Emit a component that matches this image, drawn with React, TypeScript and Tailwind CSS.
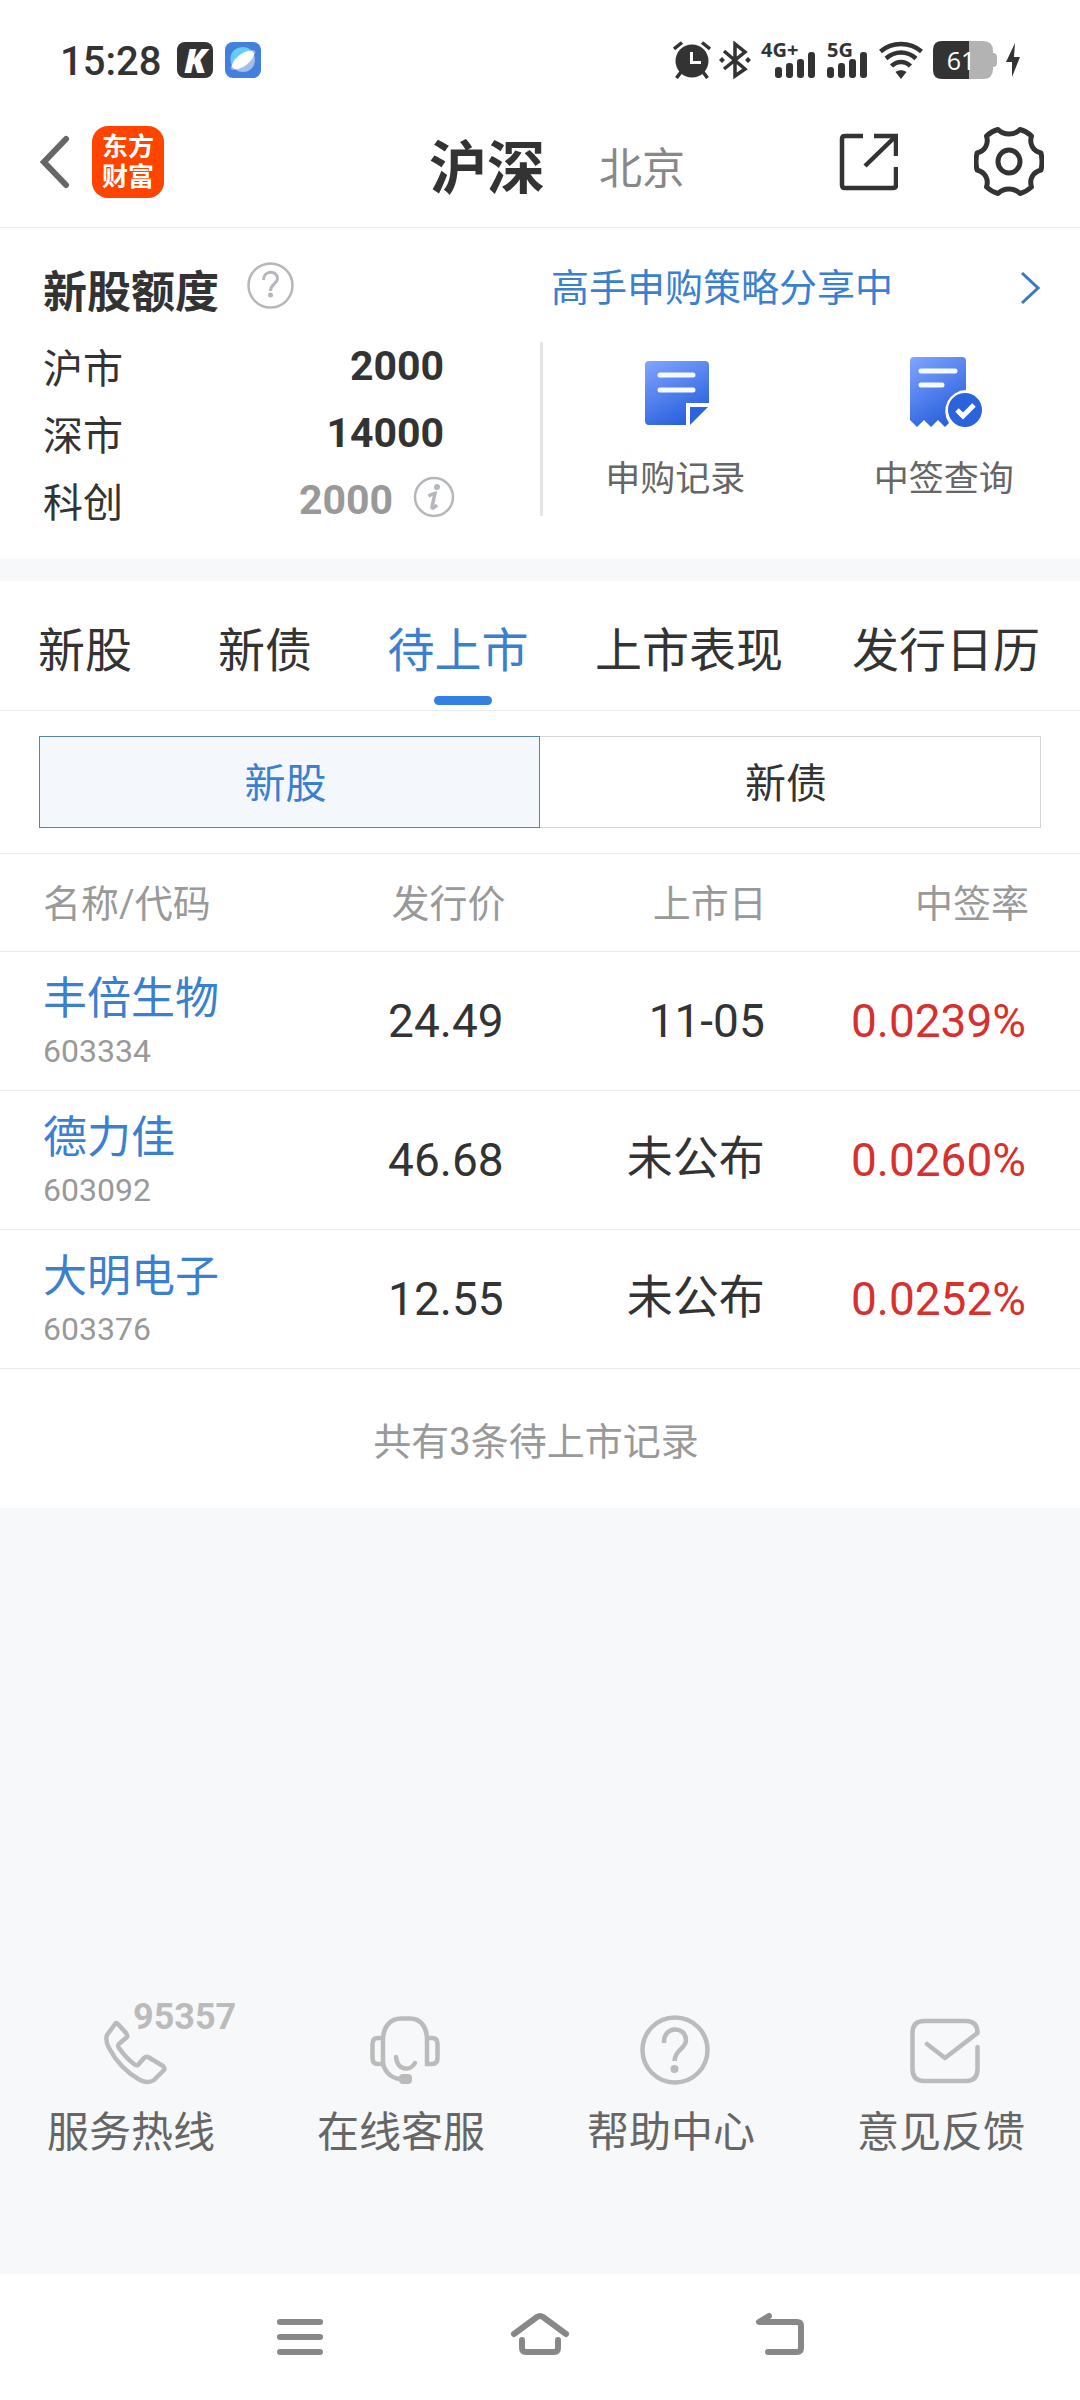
import React, { useState } from 'react';

const quotas = [
  { market: '沪市', amount: '2000' },
  { market: '深市', amount: '14000' },
];

const stocks = [
  { name: '丰倍生物', code: '603334', price: '24.49', date: '11-05', rate: '0.0239%' },
  { name: '德力佳', code: '603092', price: '46.68', date: '未公布', rate: '0.0260%' },
  { name: '大明电子', code: '603376', price: '12.55', date: '未公布', rate: '0.0252%' },
];

const tabs = ['新股', '新债', '待上市', '上市表现', '发行日历'];

const SignalBars: React.FC = () => (
  <svg width="40" height="26" viewBox="0 0 40 26" fill="#333">
    <rect x="0" y="15" width="7" height="11" rx="3" />
    <rect x="11" y="11" width="7" height="15" rx="3" />
    <rect x="22" y="7" width="7" height="19" rx="3" />
    <rect x="33" y="0" width="7" height="26" rx="3" />
  </svg>
);

const StatusBar: React.FC = () => (
  <div className="flex h-24 items-center justify-between pt-6 pr-[60px] pl-[60px] text-[#333]">
    <div className="flex items-center">
      <span className="pt-1 text-[40px] leading-[48px] font-medium">15:28</span>
      <span className="ml-4 flex h-[36px] w-[36px] items-center justify-center rounded-lg bg-[#333] font-['Open_Sans',sans-serif] text-[34px] leading-[36px] font-extrabold text-white italic">
        K
      </span>
      <svg className="ml-3" width="36" height="36" viewBox="0 0 36 36">
        <rect width="36" height="36" rx="8" fill="#4380db" />
        <circle cx="18" cy="18" r="12" fill="#a3bdec" />
        <path d="M7 23A12 12 0 0 1 28 11Z" fill="#62cdf5" />
        <ellipse cx="18" cy="18" rx="15" ry="5" transform="rotate(-37 18 18)" fill="#8fb1ea" />
        <ellipse cx="18" cy="18" rx="13" ry="6" transform="rotate(-37 18 18)" fill="#fff" />
      </svg>
    </div>

    <div className="flex items-center">
      <svg width="38" height="38" viewBox="0 0 38 38" fill="none" stroke="#333" strokeWidth="3">
        <circle cx="19" cy="20" r="16.500" fill="#333" stroke="none" />
        <path d="M1 8L9 1.500M37 8L29 1.500M8 31L3.500 37M30 31L34.500 37" strokeWidth="3.500" />
        <path d="M18.500 11V21.500H28" stroke="#fff" />
      </svg>
      <svg className="ml-2" width="32" height="38" viewBox="0 0 32 38" fill="none" stroke="#333" strokeWidth="3.500">
        <path d="M5 10L26 28L16 35V3L26 11L5 28" />
        <path d="M0 19L3 16L6 19L3 22ZM26 19L29 16L32 19L29 22Z" fill="#333" stroke="none" />
      </svg>
      <div className="relative ml-6 pt-[10px]">
        <span className="absolute -top-1 -left-[14px] font-['Open_Sans',sans-serif] text-[20px] leading-6 font-bold">4G+</span>
        <SignalBars />
      </div>
      <div className="relative ml-3 pt-[10px]">
        <span className="absolute -top-1 left-0 font-['Open_Sans',sans-serif] text-[20px] leading-6 font-bold">5G</span>
        <SignalBars />
      </div>
      <svg className="ml-3" width="44" height="38" viewBox="0 0 44 38" fill="none" stroke="#333" strokeWidth="4.500">
        <path d="M1.500 10.500C13 0.500 31 0.500 42.500 10.500" />
        <path d="M7 17.500C16 9.500 28 9.500 37 17.500" />
        <path d="M12.500 25C18 19.500 26 19.500 31.500 25" />
        <path d="M22 38L16.500 31C20 28.500 24 28.500 27.500 31Z" fill="#333" stroke="none" />
      </svg>
      <div className="relative ml-[10px] h-[38px] w-[64px]">
        <svg width="64" height="38" viewBox="0 0 64 38">
          <path d="M36 0H50Q60 0 60 10V12Q64 12 64 16V22Q64 26 60 26V28Q60 38 50 38H36Z" fill="#b3b3b3" />
          <path d="M36 0H9Q0 0 0 9V29Q0 38 9 38H36Z" fill="#333" />
        </svg>
        <span className="absolute inset-0 pr-2 text-center font-['Open_Sans',sans-serif] text-[25px] leading-[38px] text-white">61</span>
      </div>
      <svg className="ml-[9px]" width="14" height="34" viewBox="0 0 14 34" fill="#333">
        <path d="M9 0L0 19H6L6 34L14 14H8Z" />
      </svg>
    </div>
  </div>
);

const Header: React.FC = () => (
  <header className="border-b border-[#ebebeb]">
    <StatusBar />
    <div className="grid grid-cols-3 items-center pr-9 pl-10">
      <div className="flex h-[131px] items-center">
        <button aria-label="返回">
          <svg width="30" height="54" viewBox="0 0 30 54" fill="none" stroke="#666" strokeWidth="6" strokeLinecap="round">
            <path d="M26 4L4 27L26 50" />
          </svg>
        </button>
        <a
          href="#home"
          className="ml-[22px] flex h-[72px] w-[72px] items-center justify-center rounded-2xl bg-[#ff4400] text-center text-[26px] leading-[30px] font-bold text-white"
        >
          东方
          <br />
          财富
        </a>
      </div>
      <div className="flex items-center justify-center gap-[54px] pt-[14px] pl-[30px] whitespace-nowrap">
        <button className="text-[58px] leading-[72px] font-bold text-[#333]">沪深</button>
        <button className="text-[43px] leading-[72px] text-[#888]">北京</button>
      </div>
      <div className="flex items-center justify-end gap-[76px]">
        <button aria-label="分享">
          <svg width="60" height="60" viewBox="0 0 60 60" fill="none" stroke="#333" strokeWidth="4.500">
            <path d="M25 4H7Q4 4 4 7V53Q4 56 7 56H55Q58 56 58 53V35" />
            <path d="M36 4H58V24M58 4L27 34" />
          </svg>
        </button>
        <button aria-label="设置">
          <svg width="70" height="71" viewBox="0 0 70 71" fill="none" stroke="#333" strokeWidth="5" strokeLinejoin="round">
            <path d="M24 3.500C30 9.500 40 9.500 46 3.500Q52 5 57.500 10C55 18 59 25 67 27Q69 35.500 67 44C59 46 55 53 57.500 61Q52 66 46 67.500C40 61.500 30 61.500 24 67.500Q18 66 12.500 61C15 53 11 46 3 44Q1 35.500 3 27C11 25 15 18 12.500 10Q18 5 24 3.500Z" />
            <ellipse cx="35" cy="35.500" rx="11" ry="11.500" />
          </svg>
        </button>
      </div>
    </div>
  </header>
);

const QuotaPanel: React.FC = () => (
  <section className="grid grid-cols-2 pt-8 pb-[43px]">
    <div>
      <div className="flex items-center pl-[43px]">
        <h2 className="text-[44px] leading-[66px] font-bold">新股额度</h2>
        <button aria-label="额度说明" className="ml-7 pb-4">
          <svg width="47" height="47" viewBox="0 0 47 47" fill="none" stroke="#b4b7bb" strokeWidth="2.500">
            <circle cx="23.500" cy="23.500" r="22" />
            <path d="M16.500 18C16.500 8 30.500 8 30.500 16.500C30.500 21.500 23.500 22 23.500 29" strokeWidth="3" />
            <circle cx="23.500" cy="33" r="2.500" fill="#b4b7bb" stroke="none" />
          </svg>
        </button>
      </div>
      <dl className="mt-4 -mr-[3px] border-r-[3px] border-[#e5e5e5] pr-[96px] pl-[43px]">
        {quotas.map((quota) => (
          <div key={quota.market} className="flex h-[67px] justify-between">
            <dt className="pt-1 text-[40px] leading-[48px]">{quota.market}</dt>
            <dd className="text-[41px] leading-[48px] font-bold">{quota.amount}</dd>
          </div>
        ))}
        <div className="-mr-[11px] flex h-10 justify-between">
          <dt className="pt-1 text-[40px] leading-[48px]">科创</dt>
          <dd className="flex items-start text-[41px] leading-[48px] font-bold text-[#999]">
            2000
            <button aria-label="科创额度说明" className="ml-5">
              <svg width="42" height="42" viewBox="0 0 42 42" fill="none" stroke="#b4b7bb" strokeWidth="2.500">
                <circle cx="21" cy="21" r="19" />
                <circle cx="24" cy="11" r="3" fill="#b4b7bb" stroke="none" />
                <path d="M15.500 20Q19 18 22 17.500L19 31Q19 34 24 29" strokeWidth="3.500" />
              </svg>
            </button>
          </dd>
        </div>
      </dl>
    </div>

    <div>
      <a href="#strategy" className="flex items-center justify-between pr-10 pl-[11px] text-[#3b7fd1]">
        <span className="text-[38px] leading-[56px]">高手申购策略分享中</span>
        <svg width="20" height="34" viewBox="0 0 20 34" fill="none" stroke="#3b78c0" strokeWidth="3">
          <path d="M2 2L18 17L2 32" />
        </svg>
      </a>
      <div className="mt-10 grid grid-cols-2 pl-[3px] text-center text-[35px] leading-[48px] text-[#666]">
        <a href="#records" className="flex flex-col items-center gap-7">
          <svg width="72" height="72" viewBox="0 0 72 72">
            <defs>
              <linearGradient id="sheet" x1="0" y1="0" x2="0.500" y2="1">
                <stop offset="0" stopColor="#82a5ff" />
                <stop offset="1" stopColor="#2b62de" />
              </linearGradient>
            </defs>
            <path d="M8 5H64Q68 5 68 9V47H45V69H8Q4 69 4 65V9Q4 5 8 5Z" fill="url(#sheet)" />
            <path d="M49 51H67L49 69Z" fill="#2b62de" />
            <path d="M19 19H52M19 34H52" stroke="#f4fbff" strokeWidth="5" strokeLinecap="round" />
          </svg>
          <span className="pr-1">申购记录</span>
        </a>
        <a href="#lottery" className="flex flex-col items-center gap-7">
          <svg width="72" height="72" viewBox="0 0 72 72">
            <path d="M4 1H52Q56 1 56 5V34A21 21 0 0 0 39 67L35 71L28 64L21 71L14 64L7 71L0 64V5Q0 1 4 1Z" fill="url(#sheet)" />
            <path d="M11 15H45M11 29H32" stroke="#f4fbff" strokeWidth="5" strokeLinecap="round" />
            <circle cx="55" cy="54" r="17" fill="#2b62de" />
            <path d="M47 54L53 60L64 49" fill="none" stroke="#fff" strokeWidth="5" />
          </svg>
          <span className="pr-1">中签查询</span>
        </a>
      </div>
    </div>
  </section>
);

const StockTable: React.FC = () => (
  <table className="w-full table-fixed border-t border-[#ebebeb] text-right">
    <thead>
      <tr className="border-b border-[#ebebeb] text-[38px] leading-[48px] text-[#999]">
        <th className="w-[47%] pt-[26px] pb-[23px] font-normal">
          <div className="flex justify-between pr-[2px] pl-[43px]">
            <span>名称/代码</span>
            <span>发行价</span>
          </div>
        </th>
        <th className="w-[24%] pt-[26px] pb-[23px] font-normal">上市日</th>
        <th className="pt-[26px] pr-[51px] pb-[23px] font-normal">中签率</th>
      </tr>
    </thead>
    <tbody>
      {stocks.map((stock) => (
        <tr key={stock.code} className="h-[139px] border-b border-[#ebebeb] text-[46px] leading-[56px]">
          <td>
            <div className="flex items-center justify-between pr-[4px] pl-[43px]">
              <a href={`#${stock.code}`} className="text-left">
                <div className="text-[44px] leading-[60px] text-[#3b7fd1]">{stock.name}</div>
                <div className="text-[32px] leading-[44px] text-[#999]">{stock.code}</div>
              </a>
              <span>{stock.price}</span>
            </div>
          </td>
          <td className={stock.date === '未公布' ? 'pr-[2px] pb-1' : 'pr-[2px]'}>{stock.date}</td>
          <td className="pr-[54px] text-[#d6302f]">{stock.rate}</td>
        </tr>
      ))}
    </tbody>
  </table>
);

const ServiceBar: React.FC = () => (
  <footer className="mt-auto grid grid-cols-4 pb-[113px] text-center text-[42px] leading-[56px] text-[#666]">
    <a href="tel:95357" className="flex flex-col items-center gap-5">
      <div className="relative">
        <svg width="70" height="70" viewBox="0 0 70 70" fill="none" stroke="#bbb" strokeWidth="4.500" strokeLinejoin="round">
          <path d="M15 9L7 20Q5 25 9 33Q20 54 40 65Q48 69 54 65L64 55Q65 53 63 51L48 42Q46 41 44 43L38 50Q36 51 34 49Q26 43 19 33Q17 30 20 28L27 22Q28 21 26 18L18 9Q16 7 15 9Z" />
        </svg>
        <span className="absolute -top-[18px] left-[33px] text-[36px] leading-[40px] font-bold text-[#bbb]">95357</span>
      </div>
      <span className="pr-2">服务热线</span>
    </a>
    <a href="#chat" className="flex flex-col items-center gap-5">
      <svg width="70" height="70" viewBox="0 0 70 70" fill="none" stroke="#bbb" strokeWidth="4.500">
        <path d="M13 49H8Q2.500 49 2.500 43V29Q2.500 23 8 23H13" />
        <path d="M30 64C20 63 13 55 13 46V25C13 11 21 3.500 31 3.500H40C50 3.500 57 11 57 25V49H62Q67.500 49 67.500 43V29Q67.500 23 62 23H57" />
        <path d="M26 42C27 55 40 57 45 48" strokeLinecap="round" />
        <rect x="29" y="59" width="13" height="10" rx="4" fill="#bbb" stroke="none" />
      </svg>
      <span className="pr-2">在线客服</span>
    </a>
    <a href="#help" className="flex flex-col items-center gap-5">
      <svg width="70" height="70" viewBox="0 0 70 70" fill="none" stroke="#bbb" strokeWidth="4.500">
        <circle cx="35" cy="35" r="32.500" />
        <path d="M24 28C23 10 46 11 46 25C46 34 35 34 34.500 46" />
        <circle cx="34.500" cy="54" r="4" fill="#bbb" stroke="none" />
      </svg>
      <span className="pr-2">帮助中心</span>
    </a>
    <a href="#feedback" className="flex flex-col items-center gap-5">
      <svg width="70" height="70" viewBox="0 0 70 70" fill="none" stroke="#bbb" strokeWidth="4.500">
        <path d="M67.500 32V54Q67.500 66 56 66H14Q2.500 66 2.500 54V18Q2.500 6 14 6H56Q67.500 6 67.500 18L35 43L17 29" strokeLinecap="round" strokeLinejoin="round" />
      </svg>
      <span className="pr-2">意见反馈</span>
    </a>
  </footer>
);

const NavBar: React.FC = () => (
  <nav className="flex h-[126px] items-center justify-center gap-[180px] bg-white">
    <button aria-label="最近任务">
      <svg width="60" height="50" viewBox="0 0 60 50" stroke="#888" strokeWidth="6" strokeLinecap="round">
        <path d="M10 10H50M10 25H50M10 40H50" />
      </svg>
    </button>
    <button aria-label="主屏幕">
      <svg width="60" height="50" viewBox="0 0 60 50" fill="none" stroke="#888" strokeWidth="6" strokeLinecap="round" strokeLinejoin="round">
        <path d="M4 22L27 5Q30 3 33 5L56 22" />
        <path d="M12 28V36Q12 40 16 40H44Q48 40 48 36V28" />
      </svg>
    </button>
    <button aria-label="后退">
      <svg width="60" height="50" viewBox="0 0 60 50" fill="none" stroke="#888" strokeWidth="6" strokeLinecap="round" strokeLinejoin="round">
        <path d="M19 4L9 10H47Q51 10 51 14V36Q51 40 47 40H18" />
      </svg>
    </button>
  </nav>
);

const App: React.FC = () => {
  const [activeTab, setActiveTab] = useState('待上市');
  const [kind, setKind] = useState('新股');

  return (
    <div className="flex min-h-screen flex-col bg-[#f7f8fa] font-[Roboto,'Noto_Sans_CJK_SC',sans-serif] text-[#333]">
      <div className="bg-white">
        <Header />
        <QuotaPanel />
      </div>

      <main className="mt-[22px] bg-white">
        <div className="grid grid-cols-[180fr_180fr_206fr_256fr_258fr] border-b border-[#ebebeb]">
          {tabs.map((tab) => (
            <button
              key={tab}
              onClick={() => setActiveTab(tab)}
              className={`flex flex-col items-center pt-[38px] pb-[5px] text-[47px] leading-[64px] whitespace-nowrap ${
                activeTab === tab ? 'text-[#3b7fd1]' : 'text-[#333]'
              }`}
            >
              <span className="pr-[10px]">{tab}</span>
              {activeTab === tab && <span className="mt-[13px] h-[9px] w-[58px] rounded-full bg-[#3480e2]" />}
            </button>
          ))}
        </div>

        <div className="grid grid-cols-2 px-[39px] py-[25px]">
          {['新股', '新债'].map((item) => (
            <button
              key={item}
              onClick={() => setKind(item)}
              className={`border pt-[19px] pr-2 pb-[15px] text-[41px] leading-[56px] ${
                kind === item
                  ? 'border-[#5585ac] bg-[#f4f8fd] text-[#3b7fd1]'
                  : 'border-l-0 border-[#d4d4d4] text-[#333]'
              }`}
            >
              {item}
            </button>
          ))}
        </div>

        <StockTable />
        <p className="pt-[49px] pr-2 pb-[42px] text-center text-[38px] leading-[48px] text-[#999]">共有3条待上市记录</p>
      </main>

      <ServiceBar />
      <NavBar />
    </div>
  );
};

export default App;
